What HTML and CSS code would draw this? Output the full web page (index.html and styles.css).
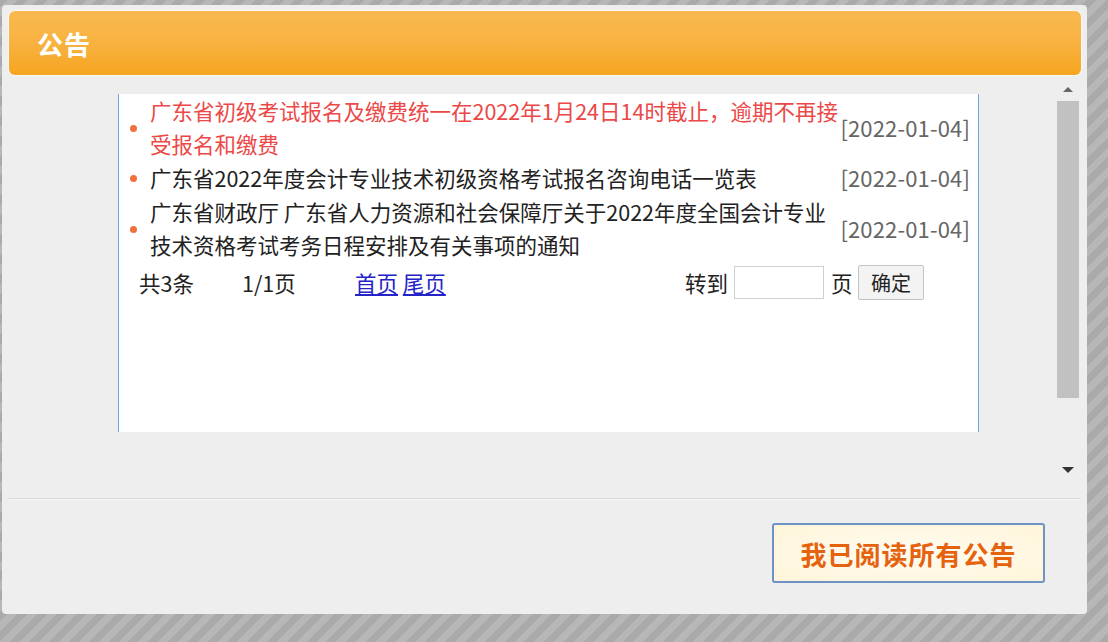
FILE: index.html
```html
<!DOCTYPE html>
<html lang="zh-CN">
<head>
<meta charset="utf-8">
<title>公告</title>
<link rel="stylesheet" href="styles.css">
</head>
<body>
<div class="dialog">
  <div class="header"><span class="title">公告</span></div>
  <div class="body">
    <div class="scroll">
      <div class="list-box">
        <div class="item">
          <span class="dot"></span>
          <span class="text red">广东省初级考试报名及缴费统一在2022年1月24日14时截止，逾期不再接受报名和缴费</span>
          <span class="date">[2022-01-04]</span>
        </div>
        <div class="item">
          <span class="dot"></span>
          <span class="text">广东省2022年度会计专业技术初级资格考试报名咨询电话一览表</span>
          <span class="date">[2022-01-04]</span>
        </div>
        <div class="item">
          <span class="dot"></span>
          <span class="text">广东省财政厅 广东省人力资源和社会保障厅关于2022年度全国会计专业技术资格考试考务日程安排及有关事项的通知</span>
          <span class="date">[2022-01-04]</span>
        </div>
        <div class="pager">
          <span class="p-count">共3条</span>
          <span class="p-page">1/1页</span>
          <span class="p-links"><a href="#">首页</a> <a href="#">尾页</a></span>
          <span class="p-goto">转到</span>
          <input class="p-input" type="text">
          <span class="p-unit">页</span>
          <button class="p-btn" type="button">确定</button>
        </div>
      </div>
    </div>
    <div class="scrollbar">
      <span class="arrow-up"></span>
      <span class="thumb"></span>
      <span class="track-rest"></span>
      <span class="arrow-down"></span>
    </div>
  </div>
  <div class="footer">
    <button class="read-btn" type="button">我已阅读所有公告</button>
  </div>
</div>
</body>
</html>
```
FILE: styles.css
```css
html, body {
  margin: 0;
  padding: 0;
}
body {
  width: 1108px;
  height: 642px;
  overflow: hidden;
  font-family: "Noto Sans CJK SC", "Noto Sans", sans-serif;
  background: repeating-linear-gradient(-45deg, #aaaaaa 0 7px, #b7b7b7 7px 14px);
  padding-top: 5px;
  padding-left: 2px;
  box-sizing: border-box;
}
.dialog {
  width: 1085px;
  height: 609px;
  background: #eeeeee;
  border-radius: 4px;
  box-sizing: border-box;
  padding: 6px 6px 0 7px;
  display: flex;
  flex-direction: column;
}
.header {
  height: 64px;
  flex: none;
  border-radius: 6px;
  background: linear-gradient(to bottom, #f9b94f 0%, #f8b240 50%, #f5a51f 100%);
  box-shadow: 0 0 0 1px rgba(255,255,255,0.6);
  display: flex;
  align-items: center;
  padding-left: 28px;
}
.title {
  color: #ffffff;
  font-size: 26px;
  font-weight: 700;
  letter-spacing: 1px;
}
.body {
  margin-top: 3px;
  height: 420px;
  flex: none;
  display: flex;
  border-bottom: 1px solid #d9d9d9;
}
.scroll {
  flex: 1;
  padding: 16px 0 0 109px;
}
.list-box {
  width: 861px;
  height: 338px;
  box-sizing: border-box;
  background: #ffffff;
  border-left: 1px solid #6ea6dc;
  border-right: 1px solid #6ea6dc;
  padding: 0 0 0 5px;
}
.item {
  display: grid;
  grid-template-columns: 26px 688px 1fr;
  align-items: center;
  margin-bottom: 1px;
  font-size: 21.5px;
  line-height: 33px;
  color: #222222;
}
.dot {
  width: 7px;
  height: 7px;
  border-radius: 50%;
  background: #f2703e;
  margin-left: 6px;
  margin-top: 2px;
}
.text.red {
  color: #ec4848;
}
.date {
  color: #666666;
  text-align: right;
  padding-right: 8px;
  white-space: nowrap;
  font-size: 22px;
  letter-spacing: 0.15px;
}
.pager {
  display: flex;
  align-items: center;
  height: 38px;
  font-size: 21.5px;
  color: #222222;
  padding-left: 15px;
  margin-top: 2px;
}
.p-count { width: 103px; }
.p-page { width: 113px; }
.p-links { width: 330px; }
.p-links a {
  color: #2323c8;
  text-decoration: underline;
}
.p-goto { width: 49px; }
.p-input {
  width: 90px;
  height: 33px;
  box-sizing: border-box;
  border: 1px solid #cfcfcf;
  background: #ffffff;
  margin: 0 7px 0 0;
  padding: 0;
}
.p-unit { width: 27px; }
.p-btn {
  width: 66px;
  height: 35px;
  font-family: inherit;
  font-size: 20px;
  color: #222222;
  background: #f3f3f3;
  border: 1px solid #c4c4c4;
  border-radius: 2px;
  padding: 0;
}
.scrollbar {
  width: 24px;
  margin-right: 1px;
  display: flex;
  flex-direction: column;
  align-items: center;
}
.arrow-up {
  margin-top: 9px;
  width: 0;
  height: 0;
  border-left: 5px solid transparent;
  border-right: 5px solid transparent;
  border-bottom: 5px solid #666666;
}
.thumb {
  margin-top: 9px;
  width: 22px;
  height: 297px;
  background: #c1c1c1;
}
.track-rest {
  flex: 1;
}
.arrow-down {
  margin-bottom: 25px;
  width: 0;
  height: 0;
  border-left: 6px solid transparent;
  border-right: 6px solid transparent;
  border-top: 6px solid #333333;
}
.footer {
  flex: 1;
  display: flex;
  justify-content: flex-end;
  align-items: flex-start;
  padding: 23px 36px 0 0;
  border-top: 1px solid #f6f6f6;
}
.read-btn {
  width: 273px;
  height: 60px;
  border: 2px solid #6d93c4;
  border-radius: 3px;
  background: radial-gradient(ellipse at center, #fffcf2 0%, #fff4d8 100%);
  color: #e5620e;
  font-family: inherit;
  font-size: 26px;
  font-weight: 700;
  letter-spacing: 1px;
  padding: 0;
}
```
